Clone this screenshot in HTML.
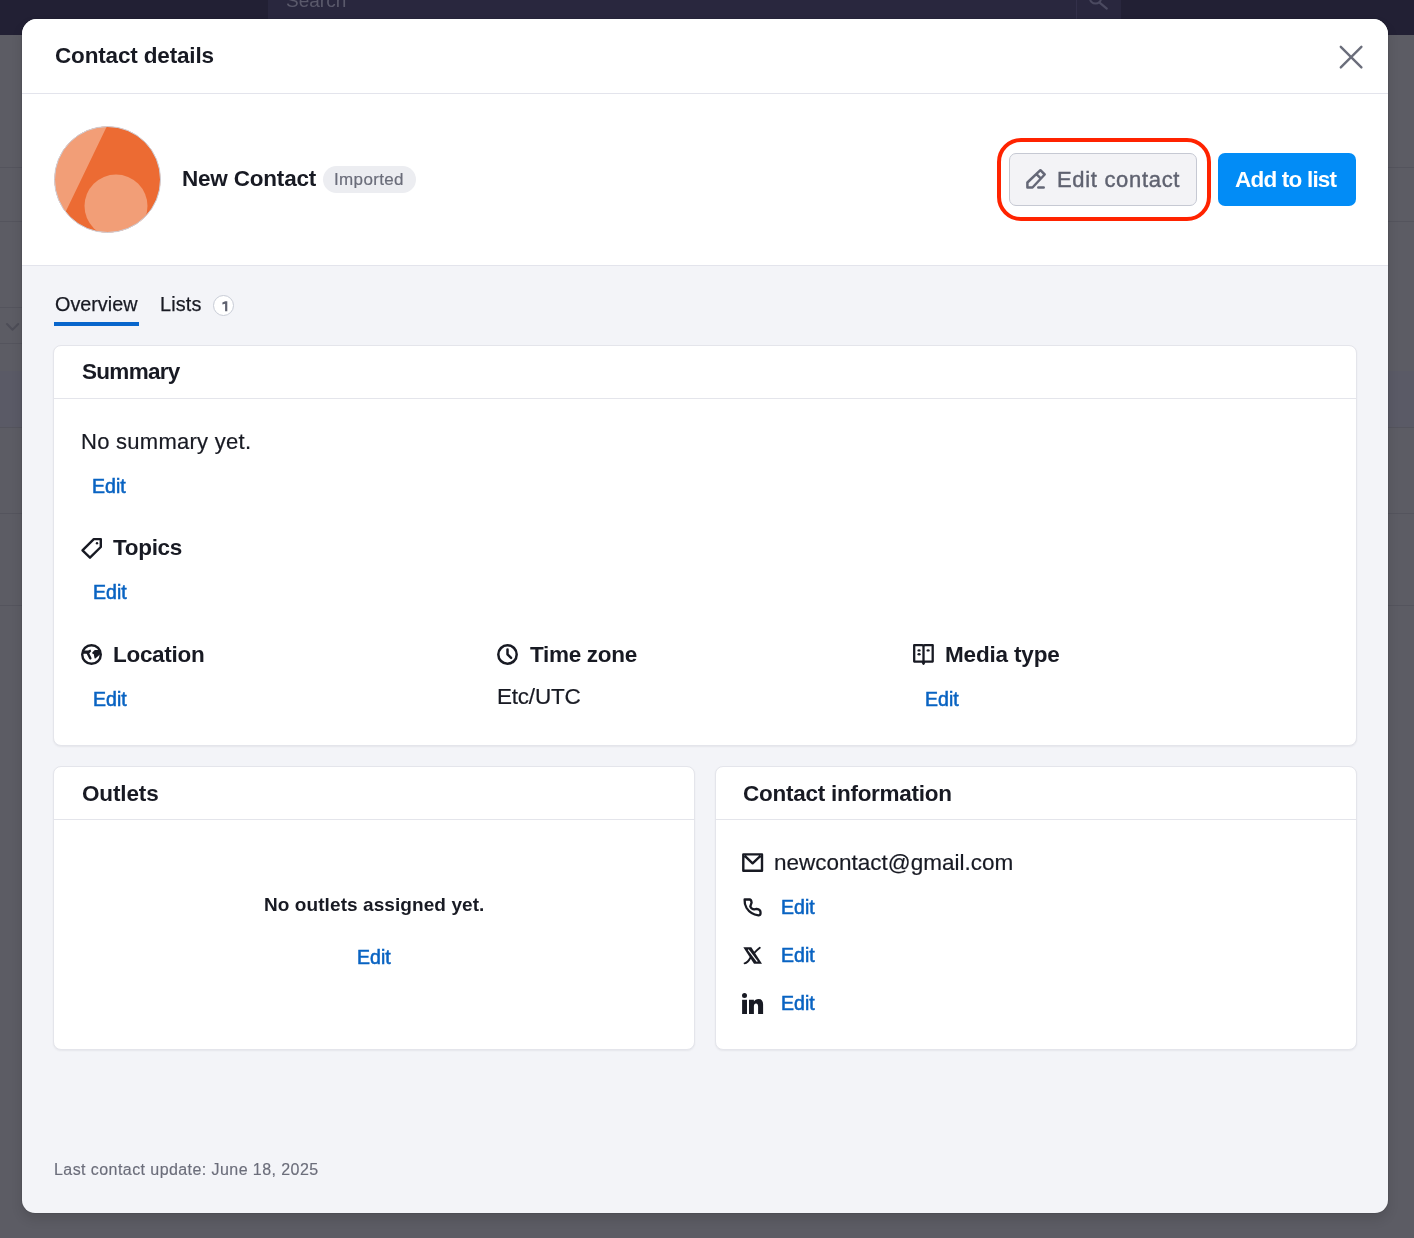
<!DOCTYPE html>
<html><head><meta charset="utf-8">
<style>
*{margin:0;padding:0;box-sizing:border-box}
html,body{width:1414px;height:1238px;overflow:hidden}
body{position:relative;background:#5c5c64;font-family:"Liberation Sans",sans-serif;color:#181a23}
.a{position:absolute;white-space:nowrap;line-height:1;will-change:transform}
.b{font-weight:bold}
#topbar{position:absolute;left:0;top:0;width:1414px;height:35px;background:#222034}
#search{position:absolute;left:268px;top:0;width:808px;height:35px;background:#29273e}
#sbtn{position:absolute;left:1076px;top:0;width:45px;height:35px;background:#29273e;border-left:1px solid #33304a}
.line{position:absolute;left:0;width:1414px;height:1px;background:#54545d}
#modal{position:absolute;left:22px;top:19px;width:1366px;height:1194px;background:#f3f4f8;border-radius:15px 15px 13px 13px;overflow:hidden;box-shadow:0 0 1.5px rgba(0,0,0,.35),0 6px 12px rgba(0,0,0,.12)}
#hdr{position:absolute;left:0;top:0;width:1366px;height:75px;background:#fff;border-bottom:1px solid #e3e4ec}
#prof{position:absolute;left:0;top:75px;width:1366px;height:172px;background:#fff;border-bottom:1px solid #e3e4ec}
.card{position:absolute;background:#fff;border:1px solid #e4e5eb;border-radius:8px;box-shadow:0 1px 2px rgba(20,20,40,.06)}
.card .hd{position:absolute;left:0;top:0;right:0;height:53px;border-bottom:1px solid #e4e5eb}
.link{color:#0963c2;-webkit-text-stroke:0.55px #0963c2;letter-spacing:0.05px;font-size:19.5px!important}
</style></head><body>
<div id="topbar"></div>
<div id="search"></div>
<div id="sbtn"></div>
<div class="a" style="left:286px;top:-9.5px;font-size:19px;color:#5a596b">Search</div>
<svg style="position:absolute;left:1080px;top:0" width="40" height="20" viewBox="0 0 40 20"><circle cx="15.5" cy="-2" r="5.6" fill="none" stroke="#4b4a60" stroke-width="2"/><path d="M19.6 2.6L26.8 8.6" stroke="#4b4a60" stroke-width="2.2" stroke-linecap="round"/></svg>
<div class="line" style="top:167px"></div>
<div class="line" style="top:221px"></div>
<div class="line" style="top:307px;width:22px"></div>
<div class="line" style="top:343px;width:22px"></div>
<div style="position:absolute;left:0;top:371px;width:1414px;height:56px;background:#5a5a66"></div>
<svg style="position:absolute;left:0;top:315px" width="24" height="24" viewBox="0 0 24 24"><path d="M7 9L12.5 14.8L18.2 9" fill="none" stroke="#4d4d57" stroke-width="2" stroke-linecap="round" stroke-linejoin="round"/></svg>
<div class="line" style="top:427px"></div>
<div class="line" style="top:513px"></div>
<div class="line" style="top:605px"></div>

<div id="modal">
  <div id="hdr"></div>
  <div id="prof"></div>
</div>

<!-- header -->
<div class="a b" style="left:55px;top:44.58px;font-size:22.5px;letter-spacing:-0.16px">Contact details</div>
<svg style="position:absolute;left:1330px;top:36px" width="42" height="42" viewBox="0 0 42 42"><path d="M10.8 10.8L31.4 31.4M31.4 10.8L10.8 31.4" stroke="#6b6e7b" stroke-width="2.4" stroke-linecap="round"/></svg>

<!-- profile -->
<svg style="position:absolute;left:54px;top:126px" width="107" height="107" viewBox="0 0 107 107">
  <defs><clipPath id="cc"><circle cx="53.5" cy="53.5" r="53"/></clipPath></defs>
  <g clip-path="url(#cc)">
    <rect width="107" height="107" fill="#ec6b33"/>
    <path d="M0 0 L53 0 L12.5 84 L0 110 Z" fill="#f29e77"/>
    <circle cx="62" cy="80" r="31.5" fill="#f29e77"/>
  </g>
  <circle cx="53.5" cy="53.5" r="53" fill="none" stroke="#cdd0da" stroke-width="1"/>
</svg>
<div class="a b" style="left:182px;top:167.58px;font-size:22.5px;letter-spacing:-0.20px">New Contact</div>
<div style="position:absolute;left:323px;top:166px;width:93px;height:27px;border-radius:14px;background:#ecedf1"></div>
<div class="a" style="left:334px;top:171px;font-size:17px;letter-spacing:0.35px;color:#6b6d7a;-webkit-text-stroke:0.2px #6b6d7a">Imported</div>

<div style="position:absolute;left:997px;top:138px;width:214px;height:83px;border:4px solid #ff2300;border-radius:24px"></div>
<div style="position:absolute;left:1009px;top:153px;width:188px;height:53px;border:1px solid #c6c9d3;border-radius:7px;background:#f3f3f6"></div>
<svg style="position:absolute;left:1020px;top:164px" width="32" height="32" viewBox="0 0 32 32"><path d="M7.4 23.5V18.5L20.4 6.2L24.7 10.5L12.5 23.5Z M16.4 10.2L20.7 14.4" fill="none" stroke="#656877" stroke-width="2.5" stroke-linejoin="round"/><path d="M18.3 23.5H23.7" stroke="#656877" stroke-width="2.5" stroke-linecap="round"/></svg>
<div class="a" style="left:1057px;top:169px;font-size:22px;letter-spacing:0.68px;color:#5f6270;-webkit-text-stroke:0.4px #5f6270">Edit contact</div>
<div style="position:absolute;left:1218px;top:153px;width:138px;height:53px;border-radius:7px;background:#028cf6"></div>
<div class="a b" style="left:1235px;top:168.58px;font-size:22.5px;letter-spacing:-0.79px;color:#fff">Add to list</div>

<!-- tabs -->
<div class="a" style="left:55px;top:294.9px;font-size:19.8px;letter-spacing:0.0px;-webkit-text-stroke:0.25px #181a23">Overview</div>
<div style="position:absolute;left:54px;top:322px;width:85px;height:4px;background:#0866cc"></div>
<div class="a" style="left:160px;top:294.9px;font-size:19.8px;letter-spacing:0.15px;-webkit-text-stroke:0.25px #181a23">Lists</div>
<div style="position:absolute;left:213px;top:295px;width:21px;height:21px;border:1px solid #c8ccd6;border-radius:50%;background:#fff"></div>
<svg style="position:absolute;left:206px;top:290px" width="34" height="30" viewBox="0 0 34 30"><path d="M16.4 12.6L19.2 11.2H21.3V21.2H19.1V13.7L16.4 14.6Z" fill="#5f6270"/></svg>

<!-- summary card -->
<div class="card" style="left:53px;top:345px;width:1304px;height:401px"><div class="hd"></div></div>
<div class="a b" style="left:82px;top:360.58px;font-size:22.5px;letter-spacing:-0.71px">Summary</div>
<div class="a" style="left:81px;top:431px;font-size:22px;letter-spacing:0.27px;-webkit-text-stroke:0.2px #181a23">No summary yet.</div>
<div class="a link" style="left:92px;top:477.1px;font-size:19px">Edit</div>

<svg style="position:absolute;left:78px;top:535px" width="28" height="28" viewBox="0 0 28 28"><path d="M15.8 4.1H22.8V12L12 22.7L4.5 15.3Z" fill="none" stroke="#181a23" stroke-width="2.4" stroke-linejoin="round"/><circle cx="19" cy="8.3" r="1.2" fill="#181a23"/></svg>
<div class="a b" style="left:113px;top:536.58px;font-size:22.5px;letter-spacing:-0.31px">Topics</div>
<div class="a link" style="left:93px;top:583.1px;font-size:19px">Edit</div>

<svg style="position:absolute;left:78px;top:641px" width="28" height="28" viewBox="0 0 28 28"><circle cx="13.5" cy="13.5" r="9.3" fill="none" stroke="#181a23" stroke-width="2.4"/><path d="M4 9.4H10.2L12.4 8.4L13.2 10.3L11 12.8H4Z" fill="#181a23"/><path d="M9.8 12.2L12.3 17.3" fill="none" stroke="#181a23" stroke-width="2.5" stroke-linecap="round"/><path d="M14.8 12L17 9.8H22.5L22 12.5L17.2 16.8L16.5 13Z" fill="#181a23" stroke="#181a23" stroke-width="1.4" stroke-linejoin="round"/></svg>
<div class="a b" style="left:113px;top:643.58px;font-size:22.5px;letter-spacing:-0.30px">Location</div>
<div class="a link" style="left:93px;top:690.1px;font-size:19px">Edit</div>

<svg style="position:absolute;left:494px;top:641px" width="28" height="28" viewBox="0 0 28 28"><circle cx="13.5" cy="13.5" r="9.2" fill="none" stroke="#181a23" stroke-width="2.5"/><path d="M13.5 8.6V13.3L17.1 16.9" fill="none" stroke="#181a23" stroke-width="2.5" stroke-linecap="round" stroke-linejoin="round"/></svg>
<div class="a b" style="left:530px;top:643.58px;font-size:22.5px;letter-spacing:-0.30px">Time zone</div>
<div class="a" style="left:497px;top:685.5px;font-size:22.5px;letter-spacing:-0.22px;-webkit-text-stroke:0.2px #181a23">Etc/UTC</div>

<svg style="position:absolute;left:910px;top:641px" width="28" height="28" viewBox="0 0 28 28"><path d="M4.2 4.1H12.3L13.5 5.2L14.7 4.1H22.7V20.6H14.6L13.5 22.8L12.4 20.6H4.2Z M13.5 5.2V20.6" fill="none" stroke="#181a23" stroke-width="2.3" stroke-linejoin="round"/><ellipse cx="9.05" cy="9.4" rx="1.6" ry="1.2" fill="#181a23"/><ellipse cx="9.05" cy="13.3" rx="1.6" ry="1.2" fill="#181a23"/><ellipse cx="18.1" cy="9.4" rx="1.6" ry="1.2" fill="#181a23"/></svg>
<div class="a b" style="left:945px;top:643.58px;font-size:22.5px;letter-spacing:-0.17px">Media type</div>
<div class="a link" style="left:925px;top:690.2px;font-size:19px">Edit</div>

<!-- outlets -->
<div class="card" style="left:53px;top:766px;width:642px;height:284px"><div class="hd"></div></div>
<div class="a b" style="left:82px;top:782.58px;font-size:22.5px;letter-spacing:-0.14px">Outlets</div>
<div class="a b" style="left:264px;top:895px;font-size:19px;letter-spacing:0.08px">No outlets assigned yet.</div>
<div class="a link" style="left:357px;top:947.8px;font-size:19px">Edit</div>

<!-- contact info -->
<div class="card" style="left:715px;top:766px;width:642px;height:284px"><div class="hd"></div></div>
<div class="a b" style="left:743px;top:782.58px;font-size:22.5px;letter-spacing:-0.26px">Contact information</div>
<svg style="position:absolute;left:738px;top:848px" width="30" height="30" viewBox="0 0 30 30"><path d="M5.3 6.4H24V22.7H5.3Z M6.8 7.8L14.6 15.3L22.5 7.8" fill="none" stroke="#181a23" stroke-width="2.4" stroke-linejoin="round"/></svg>
<div class="a" style="left:774px;top:851.9px;font-size:22.5px;letter-spacing:0.0px;-webkit-text-stroke:0.2px #181a23">newcontact@gmail.com</div>
<svg style="position:absolute;left:738px;top:893px" width="30" height="30" viewBox="0 0 30 30"><path d="M6.6 6.5H11.6Q13.2 6.6 13.6 9.6L12.3 13.4Q13.6 16.2 16.2 16.3L18.6 15.8Q22.5 16.5 22.5 19L22.5 20.6Q22.3 22.4 20.4 22.3Q12.5 21.3 8.6 15Q6.3 11 6.6 6.5Z" fill="none" stroke="#181a23" stroke-width="2.3" stroke-linejoin="round"/></svg>
<div class="a link" style="left:781px;top:898.3px;font-size:19px">Edit</div>
<svg style="position:absolute;left:738px;top:941px" width="30" height="30" viewBox="0 0 30 30"><path d="M5.3 6.3H13.3L24 22.8H16Z" fill="#181a23"/><path d="M10.2 8.6L19.3 20.6" stroke="#fff" stroke-width="1.1"/><path d="M16.3 11.8Q19 9 21.8 6.8 M6.6 22.4Q9.8 21.8 12.4 16.8" fill="none" stroke="#181a23" stroke-width="1.9" stroke-linecap="round"/></svg>
<div class="a link" style="left:781px;top:946.3px;font-size:19px">Edit</div>
<svg style="position:absolute;left:738px;top:989px" width="30" height="30" viewBox="0 0 30 30"><circle cx="6.5" cy="6.5" r="2.5" fill="#181a23"/><rect x="4.1" y="10.8" width="4.9" height="14.2" fill="#181a23"/><path d="M11 10.8H15.9V12.6C16.8 11 18.3 10 20.6 10C23.6 10 25.1 12 25.1 15.5V25H20.1V17.5C20.1 15.5 19.3 14.5 18 14.5C16.6 14.5 15.9 15.6 15.9 17.5V25H11Z" fill="#181a23"/></svg>
<div class="a link" style="left:781px;top:994.3px;font-size:19px">Edit</div>

<!-- footer -->
<div class="a" style="left:54px;top:1162px;font-size:16px;letter-spacing:0.43px;color:#6b6d7a;-webkit-text-stroke:0.15px #6b6d7a">Last contact update: June 18, 2025</div>
</body></html>
